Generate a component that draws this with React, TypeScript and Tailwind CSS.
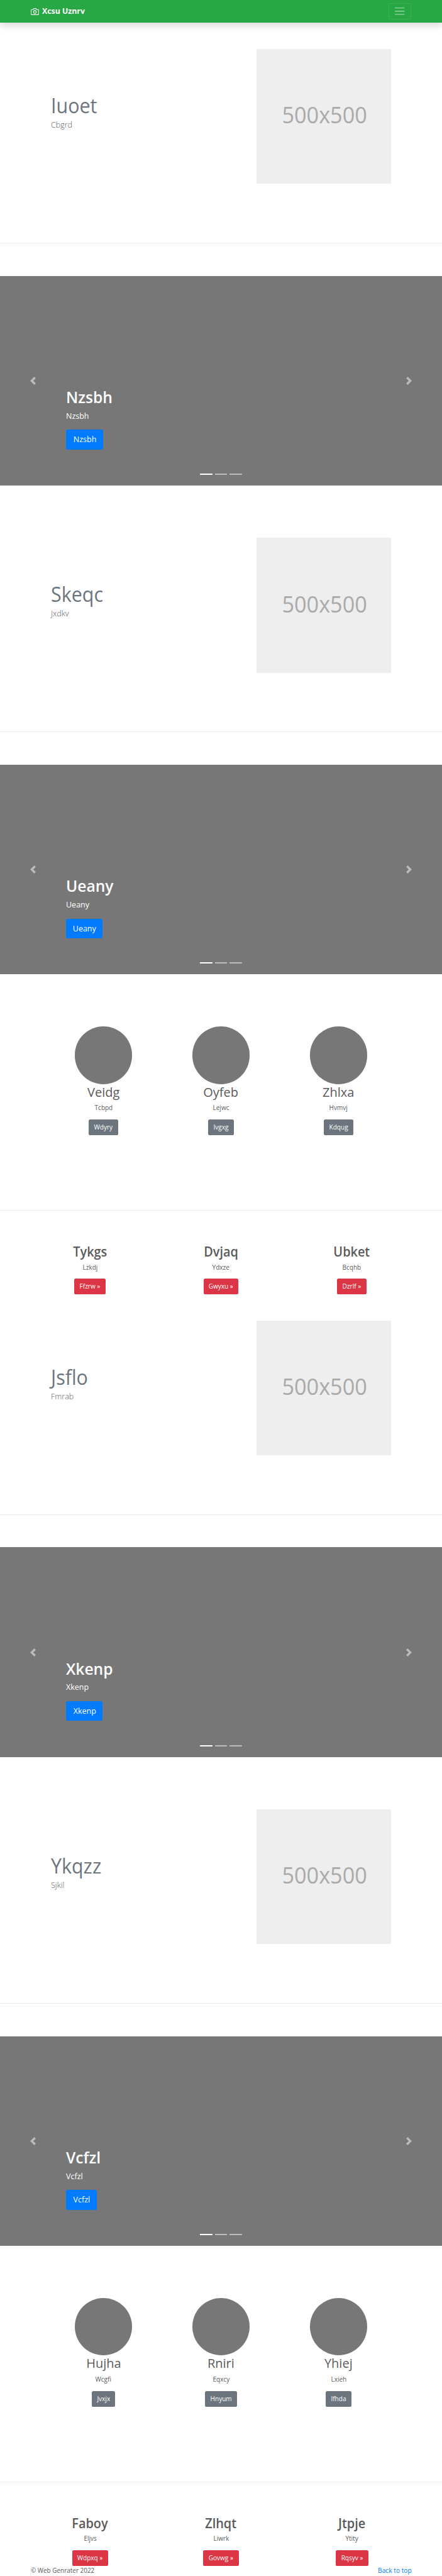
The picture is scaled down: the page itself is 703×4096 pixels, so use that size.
import React from "react";

type Item = { title: string; text: string; button: string; width: string };

const hr = "h-px w-full shrink-0 bg-[#ebebeb]";

function NavBar() {
  return (
    <header className="relative z-10 flex h-[36.45px] items-center justify-between bg-[#28a745] px-[48.82px] shadow-[0_5.2px_10.4px_rgba(0,0,0,0.15)]">
      <a className="flex items-center gap-[5.2px] text-white">
        <svg className="size-[13.02px]" viewBox="0 0 24 24" fill="none" stroke="currentColor" strokeWidth="2" strokeLinecap="round" strokeLinejoin="round">
          <path d="M23 19a2 2 0 0 1-2 2H3a2 2 0 0 1-2-2V8a2 2 0 0 1 2-2h4l2-3h6l2 3h4a2 2 0 0 1 2 2z" />
          <circle cx="12" cy="13" r="4" />
        </svg>
        <span className="origin-left scale-x-[0.945] text-[13.02px] leading-[19.5px] font-bold">Xcsu Uznrv</span>
      </a>
      <button className="flex h-[26.04px] w-[36.45px] items-center justify-center rounded-[2.6px] border border-white/10">
        <svg className="size-[19.53px] shrink-0" viewBox="0 0 30 30" fill="none" stroke="rgba(255,255,255,0.5)" strokeWidth="2" strokeLinecap="round">
          <path d="M4 7h22M4 15h22M4 23h22" />
        </svg>
      </button>
    </header>
  );
}

function Hero({ title, text, tall = false }: { title: string; text: string; tall?: boolean }) {
  return (
    <section className={tall ? "flex h-[443.93px] flex-col pt-[83.32px]" : "flex h-[402.27px] flex-col pt-[41.66px]"}>
      <div className="flex justify-between px-[80.7px]">
        <div className="pt-[70px]">
          <h2 className="origin-left scale-x-[0.935] text-[32.55px] leading-[39px] font-normal text-[#6c757d]">{title}</h2>
          <p className="mt-[1.8px] origin-left scale-x-[0.96] text-[13.02px] leading-[19.5px] font-light">{text}</p>
        </div>
        <div className="flex size-[214.28px] items-center justify-center bg-[#eee] pb-[6px] pl-[1.5px] text-[37px] text-[#aaa]">
          <span className="scale-x-[0.925]">500x500</span>
        </div>
      </div>
      <div className={"mt-[93.7px] " + hr} />
    </section>
  );
}

function Carousel({ title, width }: { title: string; width: string }) {
  return (
    <section className="relative h-[333.28px] bg-[#777] pt-[177.2px] pl-[105.45px] text-white">
      <h1 className="origin-left scale-x-[0.945] text-[26.04px] leading-[31.2px] font-semibold">{title}</h1>
      <p className="mt-[4.6px] origin-left scale-x-[0.96] text-[13.02px] leading-[19.5px]">{title}</p>
      <a className={"mt-[12.3px] flex h-[31.2px] items-center justify-center rounded-[3.1px] bg-[#007bff] text-[13.02px] " + width}>
        <span className="scale-x-[0.96]">{title}</span>
      </a>
      <div className="absolute inset-y-0 left-0 flex w-[15%] items-center justify-center">
        <svg className="size-[13.02px]" viewBox="0 0 8 8" fill="#fff" opacity="0.5">
          <path d="M5.25 0l-4 4 4 4 1.5-1.5L4.25 4l2.5-2.5L5.25 0z" />
        </svg>
      </div>
      <div className="absolute inset-y-0 right-0 flex w-[15%] items-center justify-center">
        <svg className="size-[13.02px]" viewBox="0 0 8 8" fill="#fff" opacity="0.5">
          <path d="M2.75 0l-1.5 1.5L3.75 4l-2.5 2.5L2.75 8l4-4-4-4z" />
        </svg>
      </div>
      <div className="absolute inset-x-0 top-[314.4px] flex justify-center gap-[3.9px]">
        <span className="h-[2px] w-[19.53px] bg-white" />
        <span className="h-[2px] w-[19.53px] bg-white/50" />
        <span className="h-[2px] w-[19.53px] bg-white/50" />
      </div>
    </section>
  );
}

function Circles({ items }: { items: Item[] }) {
  return (
    <section className="flex h-[376px] flex-col justify-between pt-[83.32px]">
      <div className="grid grid-cols-3 px-[71.1px]">
        {items.map((it) => (
          <div key={it.title} className="flex flex-col items-center">
            <div className="size-[91.13px] rounded-full bg-[#777]" />
            <h2 className="scale-x-[0.96] text-[20.83px] leading-[25.2px] font-normal">{it.title}</h2>
            <p className="mt-[5.6px] scale-x-[0.96] text-[10.41px] leading-[15.62px]">{it.text}</p>
            <a className={"mt-[10.2px] flex h-[24.74px] items-center justify-center rounded-[2.6px] bg-[#6c757d] text-[10.41px] text-white " + it.width}>
              <span className="scale-x-[0.965]">{it.button}</span>
            </a>
          </div>
        ))}
      </div>
      <div className={hr} />
    </section>
  );
}

function Features({ items }: { items: Item[] }) {
  return (
    <section className="grid h-[133.02px] grid-cols-3 px-[39.06px] pt-[52.8px]">
      {items.map((it) => (
        <div key={it.title} className="flex flex-col items-center">
          <h2 className="scale-x-[0.955] text-[20.83px] leading-[25px] font-semibold">{it.title}</h2>
          <p className="mt-[4.8px] scale-x-[0.96] text-[10.41px] leading-[15.62px]">{it.text}</p>
          <a className={"mt-[10px] flex h-[24.74px] items-center justify-center rounded-[2.6px] bg-[#dc3545] text-[10.41px] text-white " + it.width}>
            <span className="scale-x-[0.965] whitespace-nowrap">{it.button}</span>
          </a>
        </div>
      ))}
    </section>
  );
}

const circlesA: Item[] = [
  { title: "Veidg", text: "Tcbpd", button: "Wdyry", width: "w-[46.2px]" },
  { title: "Oyfeb", text: "Lejwc", button: "Ivgxg", width: "w-[41.2px]" },
  { title: "Zhlxa", text: "Hvmvj", button: "Kdqug", width: "w-[47.5px]" },
];
const featuresA: Item[] = [
  { title: "Tykgs", text: "Lzkdj", button: "Ffzrw »", width: "w-[49.8px]" },
  { title: "Dvjaq", text: "Ydxze", button: "Gwyxu »", width: "w-[55.6px]" },
  { title: "Ubket", text: "Bcqhb", button: "Dzrlf »", width: "w-[47.1px]" },
];
const circlesB: Item[] = [
  { title: "Hujha", text: "Wcgfi", button: "Jvxjx", width: "w-[37.7px]" },
  { title: "Rniri", text: "Eqxcy", button: "Hnyum", width: "w-[50.2px]" },
  { title: "Yhiej", text: "Lxieh", button: "Ifhda", width: "w-[40.3px]" },
];
const featuresB: Item[] = [
  { title: "Faboy", text: "Eljvs", button: "Wdpxq »", width: "w-[56.9px]" },
  { title: "Zlhqt", text: "Liwrk", button: "Govwg »", width: "w-[57.4px]" },
  { title: "Jtpje", text: "Ytity", button: "Rqsyv »", width: "w-[52px]" },
];

export default function App() {
  return (
    <div className="h-[4096px] w-[703px] overflow-hidden bg-white font-['Open_Sans','Noto_Sans',sans-serif] text-[#5a5a5a]">
      <NavBar />
      <Hero title="Iuoet" text="Cbgrd" />
      <Carousel title="Nzsbh" width="w-[58.6px]" />
      <Hero title="Skeqc" text="Jxdkv" tall />
      <Carousel title="Ueany" width="w-[57.8px]" />
      <Circles items={circlesA} />
      <Features items={featuresA} />
      <Hero title="Jsflo" text="Fmrab" />
      <Carousel title="Xkenp" width="w-[57.8px]" />
      <Hero title="Ykqzz" text="Sjkil" tall />
      <Carousel title="Vcfzl" width="w-[48.9px]" />
      <Circles items={circlesB} />
      <Features items={featuresB} />
      <footer className="flex justify-between px-[48.82px] text-[10.41px] leading-[15.62px]">
        <p className="origin-left scale-x-[0.955]">© Web Genrater 2022</p>
        <a className="origin-right scale-x-[0.98] text-[#007bff]">Back to top</a>
      </footer>
    </div>
  );
}
